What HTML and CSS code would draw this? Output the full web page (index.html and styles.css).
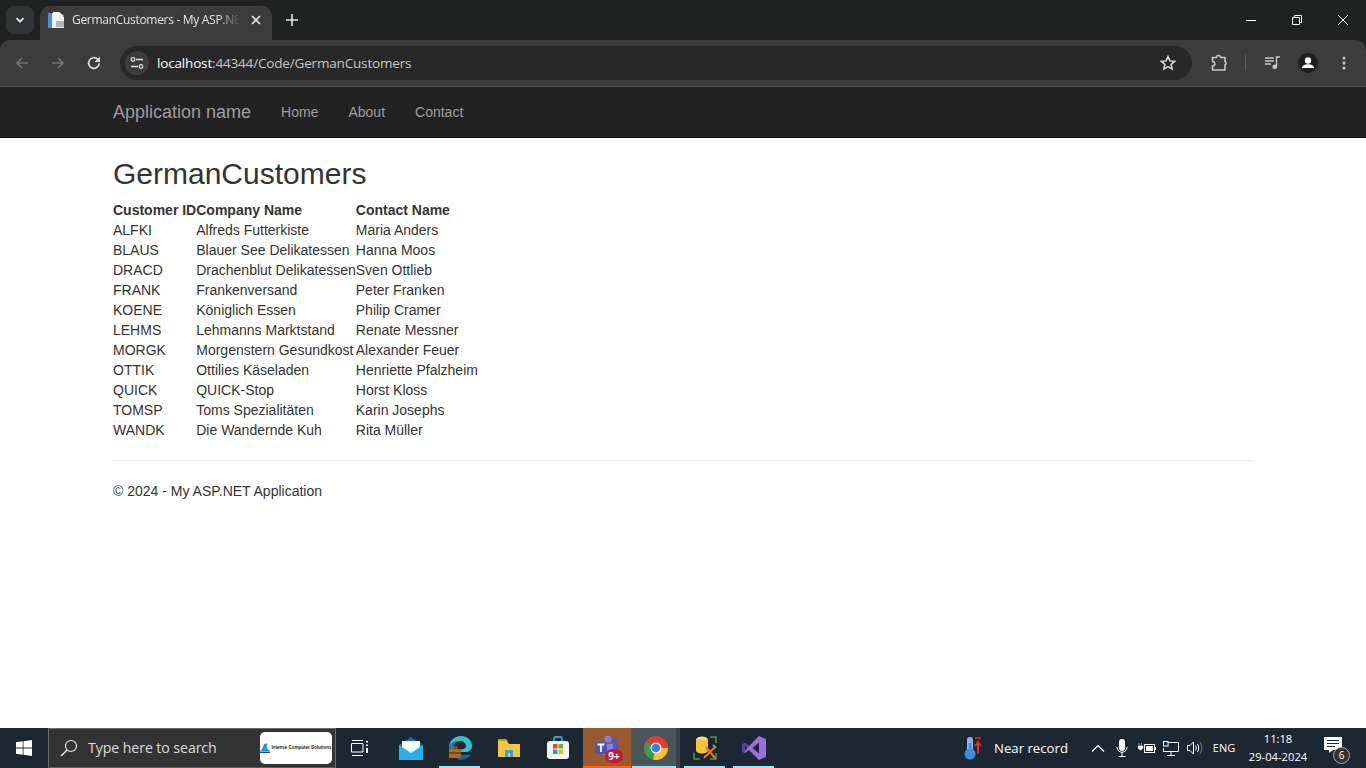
FILE: index.html
```html
<!DOCTYPE html>
<html lang="en">
<head>
<meta charset="utf-8">
<title>GermanCustomers - My ASP.NET Application</title>
<link rel="stylesheet" href="styles.css">
</head>
<body>
<header class="chrome">
  <div class="tabstrip">
    <div class="tab-search">
      <svg width="12" height="12" viewBox="0 0 12 12"><path d="M2.500 4.200 6 7.700l3.500-3.500" fill="none" stroke="#e3e3e3" stroke-width="1.800"/></svg>
    </div>
    <div class="tab">
      <svg class="favicon" width="16" height="16" viewBox="0 0 16 16">
        <path d="M0 1h11l5 4v11H0z" fill="#eef1f4"/>
        <path d="M0 1h4v15H0z" fill="#4a90c8"/>
        <path d="M5 0h6l5 4H5z" fill="#fff"/>
        <path d="M8 9h8v6H8z" fill="#aeb6bd"/>
      </svg>
      <span class="tab-title">GermanCustomers - My ASP.NET Application</span>
      <svg class="tab-close" width="10" height="10" viewBox="0 0 10 10"><path d="M1 1l8 8M9 1l-8 8" stroke="#e3e3e3" stroke-width="1.600"/></svg>
    </div>
    <svg class="newtab" width="12" height="12" viewBox="0 0 12 12"><path d="M6 0v12M0 6h12" stroke="#e3e3e3" stroke-width="1.600"/></svg>
    <div class="winctl">
      <span class="winbtn"><svg width="10" height="10" viewBox="0 0 10 10"><path d="M0 5.500h10" stroke="#fff"/></svg></span>
      <span class="winbtn"><svg width="10" height="10" viewBox="0 0 10 10"><path d="M.5 2.500h7v7h-7zM2.500 2.500V.5h7v7h-2" fill="none" stroke="#fff"/></svg></span>
      <span class="winbtn"><svg width="10" height="10" viewBox="0 0 10 10"><path d="M0 0l10 10M10 0L0 10" stroke="#fff"/></svg></span>
    </div>
  </div>
  <div class="toolbar">
    <span class="tbtn"><svg width="16" height="16" viewBox="0 0 16 16"><path d="M14 8H3M8 3 3 8l5 5" fill="none" stroke="#737575" stroke-width="1.700"/></svg></span>
    <span class="tbtn"><svg width="16" height="16" viewBox="0 0 16 16"><path d="M2 8h11M8 3l5 5-5 5" fill="none" stroke="#737575" stroke-width="1.700"/></svg></span>
    <span class="tbtn"><svg width="16" height="16" viewBox="0 0 16 16"><path d="M13.200 8.200A5.300 5.300 0 1 1 11.600 4.200L13.500 6" fill="none" stroke="#dcdcdc" stroke-width="1.700"/><path d="M14 1.500V7H8.500z" fill="#dcdcdc"/></svg></span>
    <div class="omnibox">
      <span class="site-icon"><svg width="14" height="14" viewBox="0 0 14 14"><path d="M6 3.500h7M1 10.500h7" stroke="#dcdcdc" stroke-width="1.500"/><circle cx="3" cy="3.500" r="1.800" fill="none" stroke="#dcdcdc" stroke-width="1.300"/><circle cx="11" cy="10.500" r="1.800" fill="none" stroke="#dcdcdc" stroke-width="1.300"/></svg></span>
      <span class="url"><b>localhost</b>:44344/Code/GermanCustomers</span>
      <svg class="star" width="16" height="16" viewBox="0 0 16 16"><path d="M8 1.600l1.900 4.300 4.700.5-3.500 3.100 1 4.600L8 11.700l-4.100 2.400 1-4.600L1.400 6.400l4.700-.5z" fill="none" stroke="#dcdcdc" stroke-width="1.500"/></svg>
    </div>
    <span class="ext"><svg width="18" height="18" viewBox="0 0 18 18"><path d="M2.500 3.500h4a2 2 0 0 1 4 0h4.500v4a2 2 0 0 1 0 3.500v5H2.500v-4a2.200 2.200 0 0 0 0-4.500z" fill="none" stroke="#c8c8c8" stroke-width="1.600" stroke-linejoin="round"/></svg></span>
    <span class="tool-sep"></span>
    <span class="media"><svg width="16" height="14" viewBox="0 0 16 14"><path d="M0 2h9M0 5h9M0 8h6" stroke="#c8c8c8" stroke-width="1.400"/><path d="M11.500 10V1H15" fill="none" stroke="#c8c8c8" stroke-width="1.400"/><circle cx="9.800" cy="10.800" r="2.400" fill="#c8c8c8"/></svg></span>
    <span class="avatar"><svg width="20" height="20" viewBox="0 0 20 20"><circle cx="10" cy="10" r="10" fill="#1d1e1f"/><circle cx="10" cy="7.500" r="3.200" fill="#fff"/><path d="M4 15c0-2.600 3-3.700 6-3.700s6 1.100 6 3.700z" fill="#fff"/></svg></span>
    <span class="kebab"><svg width="4" height="14" viewBox="0 0 4 14"><circle cx="2" cy="2" r="1.500" fill="#c8c8c8"/><circle cx="2" cy="7" r="1.500" fill="#c8c8c8"/><circle cx="2" cy="12" r="1.500" fill="#c8c8c8"/></svg></span>
  </div>
</header>

<nav class="navbar">
  <div class="container nav-inner">
    <a class="brand">Application name</a>
    <a class="navlink">Home</a>
    <a class="navlink">About</a>
    <a class="navlink">Contact</a>
  </div>
</nav>

<main class="page">
  <div class="container">
    <h2 class="title">GermanCustomers</h2>
    <table class="grid">
      <tr><th>Customer ID</th><th>Company Name</th><th>Contact Name</th></tr>
      <tr><td>ALFKI</td><td>Alfreds Futterkiste</td><td>Maria Anders</td></tr>
      <tr><td>BLAUS</td><td>Blauer See Delikatessen</td><td>Hanna Moos</td></tr>
      <tr><td>DRACD</td><td>Drachenblut Delikatessen</td><td>Sven Ottlieb</td></tr>
      <tr><td>FRANK</td><td>Frankenversand</td><td>Peter Franken</td></tr>
      <tr><td>KOENE</td><td>Königlich Essen</td><td>Philip Cramer</td></tr>
      <tr><td>LEHMS</td><td>Lehmanns Marktstand</td><td>Renate Messner</td></tr>
      <tr><td>MORGK</td><td>Morgenstern Gesundkost</td><td>Alexander Feuer</td></tr>
      <tr><td>OTTIK</td><td>Ottilies Käseladen</td><td>Henriette Pfalzheim</td></tr>
      <tr><td>QUICK</td><td>QUICK-Stop</td><td>Horst Kloss</td></tr>
      <tr><td>TOMSP</td><td>Toms Spezialitäten</td><td>Karin Josephs</td></tr>
      <tr><td>WANDK</td><td>Die Wandernde Kuh</td><td>Rita Müller</td></tr>
    </table>
    <hr class="rule">
    <footer class="foot">© 2024 - My ASP.NET Application</footer>
  </div>
</main>

<footer class="taskbar">
  <span class="start"><svg width="16" height="16" viewBox="0 0 16 16"><path d="M0 2.300l6.700-1V7.600H0zM7.500 1.200 16 0v7.600H7.500zM0 8.400h6.700v6.300L0 13.700zM7.500 8.400H16V16l-8.500-1.200z" fill="#fff"/></svg></span>
  <div class="searchbox">
    <svg class="glass" width="18" height="18" viewBox="0 0 18 18"><circle cx="11" cy="7" r="5.500" fill="none" stroke="#e6e6e6" stroke-width="1.200"/><path d="M7 11 1 17" stroke="#e6e6e6" stroke-width="1.400"/></svg>
    <span class="search-text">Type here to search</span>
    <span class="search-logo">
      <svg width="10" height="10" viewBox="0 0 10 10"><path d="M0 8C2 7 3 4 4 1c1-.8 3-.8 4 0C7 2 6 3 7 5l3 3z" fill="#1f9be0"/><path d="M0 8.500h10V10H0z" fill="#16557f"/></svg>
      <span class="logo-text">Intense Computer Solutions</span>
    </span>
  </div>
  <span class="tb taskview"><svg width="18" height="16" viewBox="0 0 18 16"><path d="M.5 3.500h11.500v8.500H.5zM1 .5h11M1 15.500h11" fill="none" stroke="#fff"/><path d="M15 1h2v1.500h-2zM15 4.500h2V6h-2zM15 8h2v5h-2z" fill="#fff"/></svg></span>
  <span class="tb"><svg width="24" height="23" viewBox="0 0 24 23"><path d="M0 8 12 0l12 8v15H0z" fill="#0f6fc0"/><path d="M3 4h18v8l-9 6-9-6z" fill="#fff"/><path d="M0 8l12 8 12-8v15H0z" fill="#27aef0"/></svg></span>
  <span class="tb on"><svg width="24" height="24" viewBox="0 0 24 24"><path d="M1 12C1 5 6 0 13 0c6 0 11 4 11 10 0 4-3 6-7 6H9c-1 0-1-2 1-3 4 1 8 0 8-3 0-3-3-5-6-5C7 5 3 8 1 12z" fill="#35c1c7"/><path d="M1 12C2 7 6 5 10 5c-3 1-4 4-4 6v4l-5 1z" fill="#1e72c6"/><path d="M8 19h12c2 0 3-1 4-3-2 5-6 8-11 8-3 0-5-2-5-5z" fill="#1a5fa8"/><rect x="1" y="13" width="12" height="9" rx="1" fill="#b06a1c"/><rect x="1" y="16" width="12" height="2" fill="#7c4510"/><rect x="5" y="11" width="4" height="2" fill="none" stroke="#b06a1c"/></svg></span>
  <span class="tb"><svg width="22" height="18" viewBox="0 0 22 18"><path d="M0 2h9l2 3h11v13H0z" fill="#f3c73f"/><path d="M0 0h8l2 2H0z" fill="#c99a1c"/><path d="M7 11h8v7h-3v-4h-2v4H7z" fill="#3b9ddb"/></svg></span>
  <span class="tb"><svg width="24" height="24" viewBox="0 0 24 24"><path d="M8 5V2.500A1.500 1.500 0 0 1 9.500 1h5A1.500 1.500 0 0 1 16 2.500V5" fill="none" stroke="#22a7e0" stroke-width="1.800"/><rect x="1" y="5" width="22" height="18" rx="3" fill="#f5f5f5"/><rect x="7" y="8" width="4.500" height="4.500" fill="#e8452c"/><rect x="12.500" y="8" width="4.500" height="4.500" fill="#62b52f"/><rect x="7" y="13.500" width="4.500" height="4.500" fill="#1f9be0"/><rect x="12.500" y="13.500" width="4.500" height="4.500" fill="#f7b500"/></svg></span>
  <span class="tb teams"><svg width="28" height="28" viewBox="0 0 28 28"><circle cx="15" cy="5" r="3.500" fill="#7b83eb"/><circle cx="22" cy="7" r="2.800" fill="#5059c9"/><path d="M10 10h10v11H10z" fill="#7b83eb"/><path d="M20 10h5v8h-5z" fill="#5059c9"/><rect x="2" y="8" width="12" height="12" rx="1" fill="#4b53bc"/><path d="M4.500 10.500h7M8 10.500V18" stroke="#fff" stroke-width="1.800"/></svg><span class="badge">9+</span></span>
  <span class="tb chromeapp on"><svg width="24" height="24" viewBox="0 0 24 24"><circle cx="12" cy="12" r="12" fill="#e33b2e"/><path d="M12 12 1.600 6A12 12 0 0 0 9 23.600z" fill="#2da44e"/><path d="M12 12h12A12 12 0 0 1 9 23.600z" fill="#fbc02d"/><circle cx="12" cy="12" r="5.500" fill="#fff"/><circle cx="12" cy="12" r="4.300" fill="#3b7de8"/></svg></span>
  <span class="tb on"><svg width="24" height="24" viewBox="0 0 24 24"><path d="M1 17v6h6M17 23h6v-6M23 7V1h-6" fill="none" stroke="#3f9a4a" stroke-width="1.600"/><ellipse cx="9" cy="3.500" rx="6" ry="3" fill="#f7e08a"/><path d="M3 3.500v11c0 1.600 2.700 3 6 3s6-1.400 6-3v-11z" fill="#f2c53a"/><path d="M11 22 22 11M13 11l9 11M20 9l3 3" fill="none" stroke="#e8761f" stroke-width="2"/></svg></span>
  <span class="tb on"><svg width="24" height="24" viewBox="0 0 24 24"><path d="M17 0 7 10 3 7 0 8.500v7L3 17l4-3 10 10 7-3V3zM3 14.500v-5l2.500 2.500zM17 6.500v11L10.500 12z" fill="#9a6fe0" fill-rule="evenodd"/><path d="M0 8.500 3 7v10l-3-1.500zM7 10 3 7v3l2.500 2z" fill="#5c3aa8"/></svg></span>

  <div class="tray">
    <span class="weather">
      <svg width="18" height="24" viewBox="0 0 18 24"><rect x="3" y="1" width="6" height="16" rx="3" fill="#8fb4e6"/><circle cx="6" cy="18" r="5.500" fill="#3c8de0"/><path d="M6 7v10" stroke="#3c8de0" stroke-width="2.500"/><path d="M11 2h6" stroke="#e82c20" stroke-width="1.500"/><path d="M14 18V7M11 10l3-4 3 4" fill="none" stroke="#e82c20" stroke-width="2"/></svg>
      <span class="weather-text">Near record</span>
    </span>
    <span class="ti chev"><svg width="14" height="8" viewBox="0 0 14 8"><path d="M1 7.500 7 1.500l6 6" fill="none" stroke="#fff" stroke-width="1.200"/></svg></span>
    <span class="ti mic"><svg width="12" height="18" viewBox="0 0 12 18"><rect x="3" y="0" width="6" height="12" rx="3" fill="#fff"/><path d="M1 8c0 7 10 7 10 0M6 13v4M2.500 17.500h7" fill="none" stroke="#fff"/></svg></span>
    <span class="ti bat"><svg width="18" height="12" viewBox="0 0 18 12"><path d="M1 1v3M3.500 1v3M0 4h5v2l-2 2H2L0 6z" fill="#fff" stroke="#fff" stroke-width=".5"/><rect x="6.500" y="2.500" width="10" height="8" fill="none" stroke="#fff"/><rect x="8" y="4" width="7" height="5" fill="#fff"/><rect x="17" y="5" width="1" height="3" fill="#fff"/></svg></span>
    <span class="ti net"><svg width="16" height="15" viewBox="0 0 16 15"><path d="M3.500 1.500h12v9H.5V7M8 10.500v4M4 14.500h8" fill="none" stroke="#fff"/><rect x=".5" y=".5" width="4.500" height="4.500" fill="#1c2831" stroke="#fff"/></svg></span>
    <span class="ti vol"><svg width="16" height="14" viewBox="0 0 16 14"><path d="M.5 4.500h2.500L6.500 1v12L3 9.500H.5z" fill="none" stroke="#fff"/><path d="M8.500 4.500c1 1.500 1 3.500 0 5M10.500 3c1.600 2.500 1.600 5.500 0 8" fill="none" stroke="#fff"/><path d="M13 1c2.400 3.700 2.400 8.300 0 12" fill="none" stroke="#77808a"/></svg></span>
    <span class="ti lang">ENG</span>
    <span class="clock"><span>11:18</span><span>29-04-2024</span></span>
    <span class="notif">
      <svg class="notif-icon" width="18" height="16" viewBox="0 0 18 16"><path d="M0 0h18v13H9l-4 3v-3H0z" fill="#fff"/><path d="M3 3.500h12M3 6.500h12M3 9.500h8" stroke="#1c2831"/></svg>
      <span class="notif-badge">6</span>
    </span>
  </div>
</footer>
</body>
</html>
```
FILE: styles.css
```css
* { box-sizing: border-box; }
html, body { margin: 0; padding: 0; }
body {
  width: 1366px;
  height: 768px;
  overflow: hidden;
  display: flex;
  flex-direction: column;
  background: #fff;
  color: #333;
  font: 14px/20px "Liberation Sans", Arial, sans-serif;
}

/* browser chrome */
.chrome { flex: none; height: 87px; background: #202222; border-bottom: 1px solid #505050; font-family: "Open Sans", sans-serif; }
.tabstrip { height: 40px; display: flex; align-items: flex-start; padding: 6px 0 0 6px; }
.tab-search { width: 28px; height: 28px; border-radius: 8px; background: #323535; display: flex; align-items: center; justify-content: center; }
.tab { width: 232px; height: 34px; margin-left: 6px; background: #3c3c3c; border-radius: 10px 10px 0 0; display: flex; align-items: center; padding: 0 11px 6px 8px; }
.favicon { flex: none; }
.tab-title { flex: none; width: 168px; margin-left: 8px; font-size: 12px; color: #e3e3e3; white-space: nowrap; overflow: hidden; letter-spacing: -0.3px; -webkit-mask-image: linear-gradient(90deg, #000 88%, transparent 100%); mask-image: linear-gradient(90deg, #000 88%, transparent 100%); }
.tab-close { margin-left: auto; }
.newtab { margin: 8px 0 0 14px; }
.winctl { margin-left: auto; margin-top: -6px; display: flex; }
.winbtn { width: 46px; height: 40px; display: flex; align-items: center; justify-content: center; }

.toolbar { height: 46px; background: #3c3c3c; border-radius: 10px 10px 0 0; display: flex; align-items: center; padding-left: 4px; }
.tbtn { width: 36px; height: 36px; display: flex; align-items: center; justify-content: center; }
.omnibox { width: 1072px; height: 34px; margin-left: 8px; border-radius: 17px; background: #282828; display: flex; align-items: center; padding: 0 16px 0 5px; }
.site-icon { width: 24px; height: 24px; border-radius: 50%; background: #3c3c3c; display: flex; align-items: center; justify-content: center; }
.url { margin-left: 8px; font-size: 13.500px; color: #c7c7c7; letter-spacing: -0.17px; white-space: nowrap; }
.url b { font-weight: 400; color: #fff; }
.star { margin-left: auto; }
.ext { margin-left: 18px; width: 18px; display: flex; }
.tool-sep { width: 1px; height: 16px; margin-left: 17px; background: #5f6161; }
.media { margin-left: 19px; width: 16px; display: flex; }
.avatar { margin-left: 17px; width: 20px; display: flex; }
.kebab { margin-left: 24px; width: 4px; display: flex; }

/* site navbar */
.navbar { flex: none; height: 51px; background: #222; border-bottom: 1px solid #080808; }
.container { width: 1170px; margin: 0 auto; padding: 0 15px; }
.nav-inner { display: flex; height: 50px; align-items: center; }
.brand { font-size: 18px; color: #9d9d9d; margin-right: 15px; }
.navlink { padding: 0 15px; color: #9d9d9d; }

/* page */
.page { flex: 1; min-height: 0; }
.title { margin: 19px 0 10px; font-size: 30px; line-height: 33px; font-weight: 500; color: #333; }
.grid { border-collapse: collapse; border-spacing: 0; }
.grid th { padding: 0; text-align: left; font-weight: 700; }
.grid td { padding: 0; }
.rule { margin: 20px 0; border: 0; border-top: 1px solid #eee; }
.foot { display: block; }

/* windows taskbar */
.taskbar { flex: none; height: 40px; background: #1c2831; display: flex; align-items: stretch; font-family: "Open Sans", sans-serif; color: #fff; }
.start { width: 48px; display: flex; align-items: center; justify-content: center; }
.searchbox { width: 288px; margin-right: 1px; display: flex; align-items: center; background: #333; border: 1px solid #6b6b6b; border-bottom-color: #5c5c5c; padding: 0 3px 0 11px; }
.glass { flex: none; }
.search-text { margin-left: 10px; font-size: 14.200px; color: #dcdcdc; letter-spacing: -0.1px; white-space: nowrap; }
.search-logo { margin-left: auto; width: 72px; height: 32px; background: #fff; border-radius: 5px; display: flex; align-items: center; justify-content: center; gap: 1px; }
.logo-text { font: 700 4.500px/1 "Liberation Sans", sans-serif; color: #222; white-space: nowrap; }
.tb { position: relative; flex: none; width: 49px; display: flex; align-items: center; justify-content: center; }
.tb.taskview { padding-right: 3px; }
.tb.on::after { content: ""; position: absolute; left: 4px; right: 4px; bottom: 0; height: 2px; background: #a5dff5; }
.tb.teams { background: #9a5a2b; margin-left: 1px; width: 48px; }
.tb.teams::after { content: ""; position: absolute; left: 0; right: 0; bottom: 0; height: 2px; background: #f7630c; }
.tb.chromeapp { background: linear-gradient(90deg, #7d4a24 1px, #4b555c 1px, #4b555c 45px, #3a4349 45px); }
.tb.chromeapp::after { left: 1px; right: 4px; }
.badge { position: absolute; left: 22px; top: 21px; width: 18px; height: 14px; border-radius: 7px; background: #c4173a; color: #fff; font-size: 10px; line-height: 14px; font-weight: 700; text-align: center; }

.tray { margin-left: auto; display: flex; align-items: center; padding-right: 21px; }
.weather { display: flex; align-items: center; width: 122px; }
.weather-text { margin-left: 12px; font-size: 13.200px; white-space: nowrap; }
.ti { display: flex; align-items: center; justify-content: center; }
.chev { width: 24px; }
.mic { width: 24px; }
.bat { width: 25px; }
.net { width: 24px; }
.vol { width: 23px; }
.lang { width: 36px; font-size: 11px; }
.clock { width: 72px; display: flex; flex-direction: column; align-items: center; font-size: 11.200px; line-height: 18px; }
.notif { position: relative; width: 24px; margin-left: 7px; align-self: stretch; display: flex; align-items: center; justify-content: center; }
.notif-icon { margin-bottom: 6px; }
.notif-badge { position: absolute; left: 12px; top: 19px; width: 17px; height: 17px; border-radius: 50%; background: #333; border: 1px solid #aaa; font-size: 10px; line-height: 15px; text-align: center; color: #fff; }
```
